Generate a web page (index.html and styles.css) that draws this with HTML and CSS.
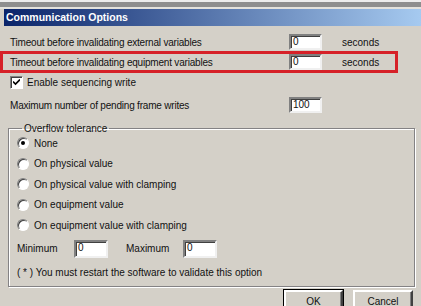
FILE: index.html
```html
<!DOCTYPE html>
<html lang="en">
<head>
  <meta charset="UTF-8" />
  <title>Communication Options</title>
  <link rel="stylesheet" href="styles.css">
</head>
<body>
  <div class="window">
    <div class="titlebar">Communication Options</div>

    <div class="content">
      <div class="row">
        <span class="label">Timeout before invalidating external variables</span>
        <span class="field">0</span>
        <span class="unit">seconds</span>
      </div>

      <div class="row highlight">
        <span class="label">Timeout before invalidating equipment variables</span>
        <span class="field">0</span>
        <span class="unit">seconds</span>
      </div>

      <div class="check-row">
        <span class="checkbox">
          <svg width="7" height="7" viewBox="0 0 7 7"><path d="M0 2.5 L2.5 5 L7 0.5" fill="none" stroke="#000" stroke-width="1.6"/></svg>
        </span>
        <span>Enable sequencing write</span>
      </div>

      <div class="row pending">
        <span class="label">Maximum number of pending frame writes</span>
        <span class="field">100</span>
      </div>

      <fieldset class="group">
        <legend>Overflow tolerance</legend>

        <div class="option"><span class="radio checked"></span>None</div>
        <div class="option"><span class="radio"></span>On physical value</div>
        <div class="option"><span class="radio"></span>On physical value with clamping</div>
        <div class="option"><span class="radio"></span>On equipment value</div>
        <div class="option"><span class="radio"></span>On equipment value with clamping</div>

        <div class="limits">
          <span class="limit-label">Minimum</span>
          <span class="field wide">0</span>
          <span class="limit-label">Maximum</span>
          <span class="field wide">0</span>
        </div>

        <p class="note">( * ) You must restart the software to validate this option</p>
      </fieldset>

      <div class="buttons">
        <button class="btn default">OK</button>
        <button class="btn">Cancel</button>
      </div>
    </div>
  </div>
</body>
</html>
```

FILE: styles.css
```css
* {
  margin: 0;
  padding: 0;
  box-sizing: border-box;
}

body {
  background: #d4d0c8;
  font-family: "Liberation Sans", Arial, sans-serif;
  font-size: 10px;
  color: #111;
  overflow: hidden;
}

.window {
  border-top: 2px solid #ededed;
  background: #d4d0c8;
}

.window::before {
  content: "";
  display: block;
  height: 5px;
  background: #8e8e8e;
  border-bottom: 2px solid #e4e2dc;
}

.titlebar {
  height: 17px;
  line-height: 17px;
  margin-left: 4px;
  padding-left: 2px;
  background: linear-gradient(to right, #0a246a, #a6caf0);
  color: #fff;
  font-weight: bold;
  font-size: 10.5px;
}

.content {
  padding-top: 6px;
}

.row {
  display: flex;
  align-items: center;
  height: 20px;
  padding-left: 10px;
}

.label {
  width: 279px;
  letter-spacing: -0.2px;
}

.field {
  display: inline-block;
  width: 33px;
  height: 16px;
  line-height: 12px;
  padding-left: 2px;
  background: #fff;
  border: 2px solid;
  border-color: #808080 #f0f0f0 #f0f0f0 #808080;
  box-shadow: inset 1px 1px 0 #404040;
}

.unit {
  margin-left: 20px;
}

.highlight {
  margin: 0 24px 0 1px;
  padding-left: 9px;
  outline: 3px solid #d62128;
  outline-offset: -2px;
}

.check-row {
  display: flex;
  align-items: center;
  gap: 4px;
  height: 17px;
  margin-top: 2px;
  padding-left: 10px;
}

.checkbox {
  display: flex;
  align-items: center;
  justify-content: center;
  width: 13px;
  height: 13px;
  background: #fff;
  border: 1px solid;
  border-color: #808080 #fff #fff #808080;
  box-shadow: inset 1px 1px 0 #404040;
}

.pending {
  margin-top: 4px;
}

.group {
  margin: 7px 6px 0 8px;
  padding: 0 0 2px 8px;
  border: 1px solid #848284;
  box-shadow: inset 1px 1px 0 #fff, 1px 1px 0 #fff;
}

.group legend {
  margin-left: 5px;
  padding: 0 2px;
  line-height: 13px;
}

.option {
  display: flex;
  align-items: center;
  gap: 5px;
  height: 20.5px;
}

.group legend + .option {
  margin-top: -2px;
}

.radio {
  width: 12px;
  height: 12px;
  border-radius: 50%;
  background: #fff;
  border: 1px solid;
  border-color: #808080 #fff #fff #808080;
  box-shadow: inset 1px 1px 0 #404040;
  display: flex;
  align-items: center;
  justify-content: center;
}

.radio.checked::after {
  content: "";
  width: 4px;
  height: 4px;
  border-radius: 50%;
  background: #000;
}

.limits {
  display: flex;
  align-items: center;
  height: 26px;
}

.limit-label {
  width: 57px;
}

.field.wide {
  width: 34px;
  height: 18px;
  margin-right: 18px;
}

.note {
  height: 22px;
  line-height: 22px;
}

.buttons {
  display: flex;
  justify-content: flex-end;
  gap: 10px;
  margin-top: 3px;
  padding-right: 8px;
}

.btn {
  width: 60px;
  height: 23px;
  font-family: inherit;
  font-size: 10px;
  color: #111;
  background: #d4d0c8;
  border: 2px solid;
  border-color: #fff #404040 #404040 #fff;
  box-shadow: inset -1px -1px 0 #808080;
}

.btn.default {
  width: 59px;
  outline: 1px solid #000;
}
```
